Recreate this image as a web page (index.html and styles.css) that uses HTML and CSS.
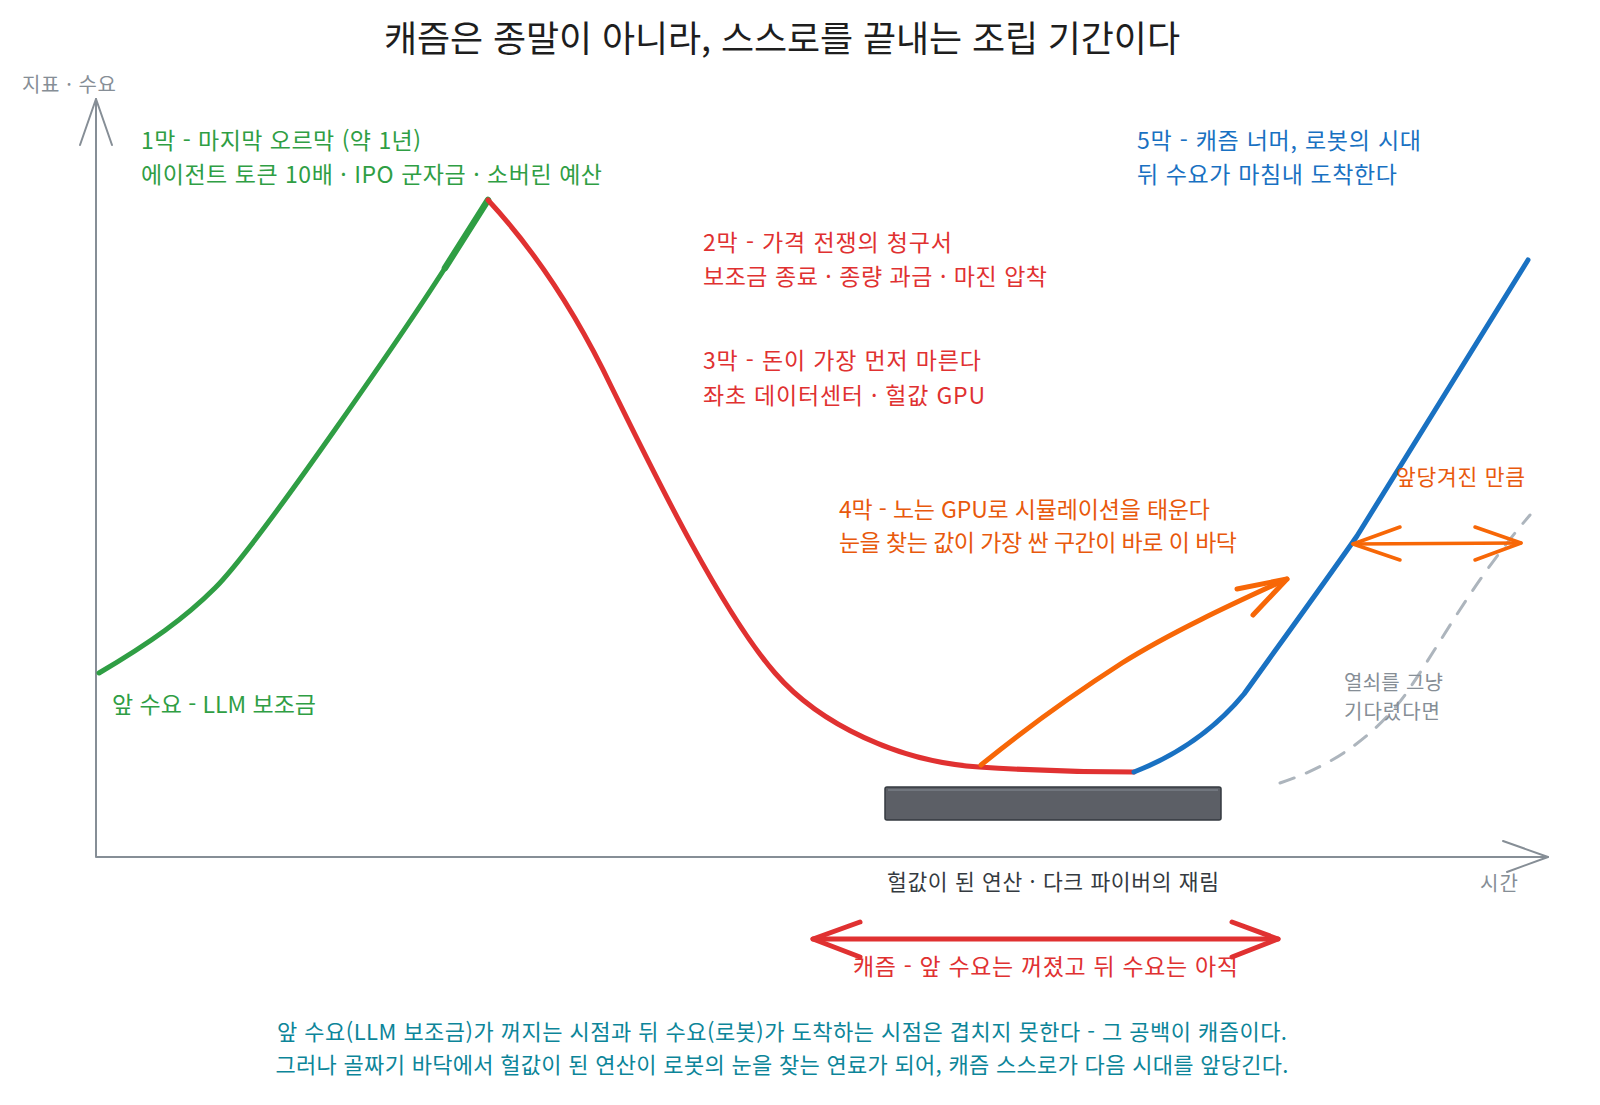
FILE: index.html
```html
<!DOCTYPE html>
<html lang="ko">
<head>
<meta charset="utf-8">
<title>캐즘은 종말이 아니라, 스스로를 끝내는 조립 기간이다</title>
<link rel="stylesheet" href="styles.css">
</head>
<body>
<main class="canvas">
<svg class="diagram" width="1600" height="1105" viewBox="0 0 1600 1105" xmlns="http://www.w3.org/2000/svg">
  <!-- title -->
  <text class="title" x="782" y="52" text-anchor="middle" textLength="796">캐즘은 종말이 아니라, 스스로를 끝내는 조립 기간이다</text>

  <!-- axes -->
  <g class="axis">
    <path d="M96,99 L96,857 L1548,857"/>
    <path d="M80,145 L96,99 L112,145"/>
    <path d="M1503,841 L1548,857 L1507,872"/>
  </g>
  <text class="lbl gray" x="22" y="92" textLength="94">지표 · 수요</text>
  <text class="lbl gray" x="1480" y="891" textLength="38">시간</text>

  <!-- dashed "if we just waited" curve -->
  <path class="dash" d="M1280,783 C1335,765 1375,735 1405,695 C1440,645 1470,585 1530,515"/>

  <!-- green: front demand -->
  <path class="ln green" d="M99,673 C150,643 185,618 215,588 C260,543 415,315 445,268"/>
  <path class="ln green thick" d="M445,268 L488,200"/>

  <!-- red: price war / fall -->
  <path class="ln red" d="M488,200 C525,240 570,300 612,388 C650,465 720,610 775,673 C820,725 900,762 979,767 C1040,771 1100,772 1134,772"/>

  <!-- blue: robot demand -->
  <path class="ln blue" d="M1134,772 C1170,758 1210,735 1244,694 C1290,630 1330,575 1357,536 L1528,260"/>

  <!-- orange: simulation arrow -->
  <path class="ln orange" d="M981,765 C1030,725 1080,690 1122,663 C1170,633 1230,605 1287,579"/>
  <path class="ln orange" d="M1237,589 L1287,579 L1253,615"/>

  <!-- orange double arrow: pulled forward -->
  <path class="ln orange thin" d="M1353,544 L1521,543"/>
  <path class="ln orange thin" d="M1400,527 L1353,544 L1400,560"/>
  <path class="ln orange thin" d="M1475,527 L1521,543 L1475,560"/>

  <!-- dark floor bar -->
  <rect class="floor" x="885" y="787" width="336" height="33" rx="2"/>
  <path class="floor-hi" d="M888,790 L1218,790"/>

  <!-- red double arrow: chasm -->
  <path class="ln red" d="M813,939 L1278,939"/>
  <path class="ln red" d="M860,922 L813,939 L860,957"/>
  <path class="ln red" d="M1232,922 L1278,939 L1232,957"/>

  <!-- annotations -->
  <text class="note green-t" x="141" y="149" textLength="280">1막 - 마지막 오르막 (약 1년)</text>
  <text class="note green-t" x="141" y="183" textLength="461">에이전트 토큰 10배 · IPO 군자금 · 소버린 예산</text>

  <text class="note red-t" x="703" y="251" textLength="249">2막 - 가격 전쟁의 청구서</text>
  <text class="note red-t" x="703" y="285" textLength="344">보조금 종료 · 종량 과금 · 마진 압착</text>

  <text class="note red-t" x="703" y="369" textLength="278">3막 - 돈이 가장 먼저 마른다</text>
  <text class="note red-t" x="703" y="404" textLength="282">좌초 데이터센터 · 헐값 GPU</text>

  <text class="note orange-t" x="839" y="518" textLength="371">4막 - 노는 GPU로 시뮬레이션을 태운다</text>
  <text class="note orange-t" x="839" y="551" textLength="398">눈을 찾는 값이 가장 싼 구간이 바로 이 바닥</text>

  <text class="note blue-t" x="1137" y="149" textLength="284">5막 - 캐즘 너머, 로봇의 시대</text>
  <text class="note blue-t" x="1137" y="183" textLength="260">뒤 수요가 마침내 도착한다</text>

  <text class="note green-t" x="112" y="713" textLength="204">앞 수요 - LLM 보조금</text>

  <text class="small orange-t" x="1396" y="485" textLength="129">앞당겨진 만큼</text>

  <text class="lbl gray" x="1344" y="690" textLength="99">열쇠를 그냥</text>
  <text class="lbl gray" x="1344" y="719" textLength="96">기다렸다면</text>

  <text class="small dark" x="887" y="890" textLength="332">헐값이 된 연산 · 다크 파이버의 재림</text>

  <text class="note red-t" x="853" y="975" textLength="385">캐즘 - 앞 수요는 꺼졌고 뒤 수요는 아직</text>

  <text class="caption" x="782" y="1040" text-anchor="middle" textLength="1010">앞 수요(LLM 보조금)가 꺼지는 시점과 뒤 수요(로봇)가 도착하는 시점은 겹치지 못한다 - 그 공백이 캐즘이다.</text>
  <text class="caption" x="782" y="1073" text-anchor="middle" textLength="1013">그러나 골짜기 바닥에서 헐값이 된 연산이 로봇의 눈을 찾는 연료가 되어, 캐즘 스스로가 다음 시대를 앞당긴다.</text>
</svg>
</main>
</body>
</html>
```

FILE: styles.css
```css
html, body {
  margin: 0;
  padding: 0;
  background: #ffffff;
}

.canvas {
  width: 1600px;
  height: 1105px;
  overflow: hidden;
}

.diagram {
  display: block;
  font-family: "Noto Sans CJK KR", "Noto Sans", sans-serif;
}

.title {
  font-size: 36px;
  fill: #1e1e1e;
}

.note {
  font-size: 23px;
}

.small {
  font-size: 21.5px;
}

.lbl {
  font-size: 20px;
}

.caption {
  font-size: 22px;
  fill: #0c8599;
}

.gray { fill: #868e96; }
.dark { fill: #343a40; }
.green-t { fill: #2f9e44; }
.red-t { fill: #e03131; }
.orange-t { fill: #e8590c; }
.blue-t { fill: #1971c2; }

.axis path {
  fill: none;
  stroke: #868e96;
  stroke-width: 2;
  stroke-linecap: round;
  stroke-linejoin: round;
}

.ln {
  fill: none;
  stroke-width: 5;
  stroke-linecap: round;
  stroke-linejoin: round;
}

.ln.thick { stroke-width: 6.5; }
.ln.thin { stroke-width: 3.5; }

.green { stroke: #2f9e44; }
.red { stroke: #e03131; }
.blue { stroke: #1971c2; }
.orange { stroke: #f76707; }

.dash {
  fill: none;
  stroke: #adb5bd;
  stroke-width: 3;
  stroke-dasharray: 15 13;
  stroke-linecap: round;
}

.floor {
  fill: #5c5f66;
  stroke: #343a40;
  stroke-width: 1.5;
}

.floor-hi {
  fill: none;
  stroke: #868e96;
  stroke-width: 1;
}
```
